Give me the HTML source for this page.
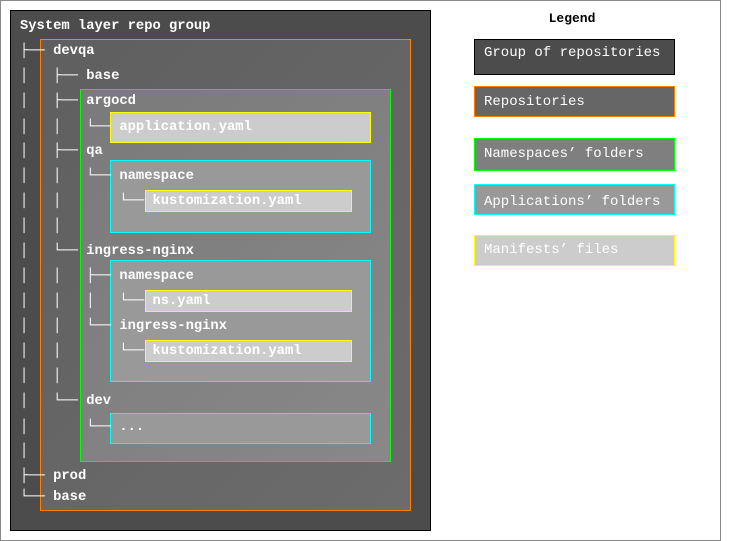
<!DOCTYPE html>
<html><head><meta charset="utf-8"><style>
body{margin:0;width:735px;height:541px;background:#fff;position:relative;overflow:hidden;font-family:"Liberation Mono","DejaVu Sans Mono",monospace}
.b{position:absolute;box-sizing:border-box}
.t{position:absolute;left:20px;height:25px;line-height:25px;white-space:pre;font-size:13.8px;font-weight:bold;color:#fff}
.lg{position:absolute;left:474px;width:201px;box-sizing:border-box;color:#fff;font-size:14px;padding-left:9px;white-space:pre}
</style></head><body>
<div class="b" style="left:0;top:0;width:721px;height:541px;border:1px solid #8a8a8a"></div>
<div class="b" style="left:10px;top:10px;width:421px;height:521px;background:#4c4c4c;border:1px solid #000"></div>
<div class="b" style="left:40px;top:39px;width:371px;height:472px;background:linear-gradient(135deg,#5f5f5f,#6c6c6c);border:1px solid #ff8000"></div>
<div class="b" style="left:80px;top:89px;width:311px;height:373px;background:linear-gradient(135deg,#7a7a7a,#888);border:1px solid #00ff00"></div>
<div class="b" style="left:110px;top:112px;width:261px;height:31px;background:#ccc;border:1px solid #ffff00"></div>
<div class="b" style="left:110px;top:160px;width:261px;height:73px;background:#999;border:1px solid #00ffff"></div>
<div class="b" style="left:145px;top:190px;width:207px;height:22px;background:#ccc;border:1px solid #ffff00"></div>
<div class="b" style="left:110px;top:260px;width:261px;height:122px;background:#999;border:1px solid #00ffff"></div>
<div class="b" style="left:145px;top:290px;width:207px;height:22px;background:#ccc;border:1px solid #ffff00"></div>
<div class="b" style="left:145px;top:340px;width:207px;height:22px;background:#ccc;border:1px solid #ffff00"></div>
<div class="b" style="left:110px;top:413px;width:261px;height:31px;background:#999;border:1px solid #00ffff"></div>

<div class="t" style="top:14px">System layer repo group</div>
<div class="t" style="top:39px">├── devqa</div>
<div class="t" style="top:64px">│   ├── base</div>
<div class="t" style="top:89px">│   ├── argocd</div>
<div class="t" style="top:115px">│   │   └── application.yaml</div>
<div class="t" style="top:139px">│   ├── qa</div>
<div class="t" style="top:164px">│   │   └── namespace</div>
<div class="t" style="top:189px">│   │       └── kustomization.yaml</div>
<div class="t" style="top:214px">│   │</div>
<div class="t" style="top:239px">│   └── ingress-nginx</div>
<div class="t" style="top:264px">│   │   ├── namespace</div>
<div class="t" style="top:289px">│   │   │   └── ns.yaml</div>
<div class="t" style="top:314px">│   │   └── ingress-nginx</div>
<div class="t" style="top:339px">│   │       └── kustomization.yaml</div>
<div class="t" style="top:364px">│   │</div>
<div class="t" style="top:389px">│   └── dev</div>
<div class="t" style="top:415px">│       └── ...</div>
<div class="t" style="top:439px">│</div>
<div class="t" style="top:464px">├── prod</div>
<div class="t" style="top:485px">└── base</div>

<div style="position:absolute;left:522px;top:10px;width:100px;text-align:center;font-weight:bold;font-size:13px;color:#000;line-height:18px">Legend</div>
<div class="lg" style="top:39px;height:36px;line-height:26px;background:#4c4c4c;border:1px solid #000">Group of repositories</div>
<div class="lg" style="top:86px;height:31px;line-height:30px;background:#666;border:1px solid #ff8000">Repositories</div>
<div class="lg" style="top:138px;height:33px;line-height:31px;background:#7f7f7f;border:1px solid #00ff00">Namespaces’ folders</div>
<div class="lg" style="top:184px;height:31px;line-height:34px;background:#999;border:1px solid #00ffff">Applications’ folders</div>
<div class="lg" style="top:235px;height:31px;line-height:29px;background:#ccc;border:1px solid #ffff00">Manifests’ files</div>
</body></html>
